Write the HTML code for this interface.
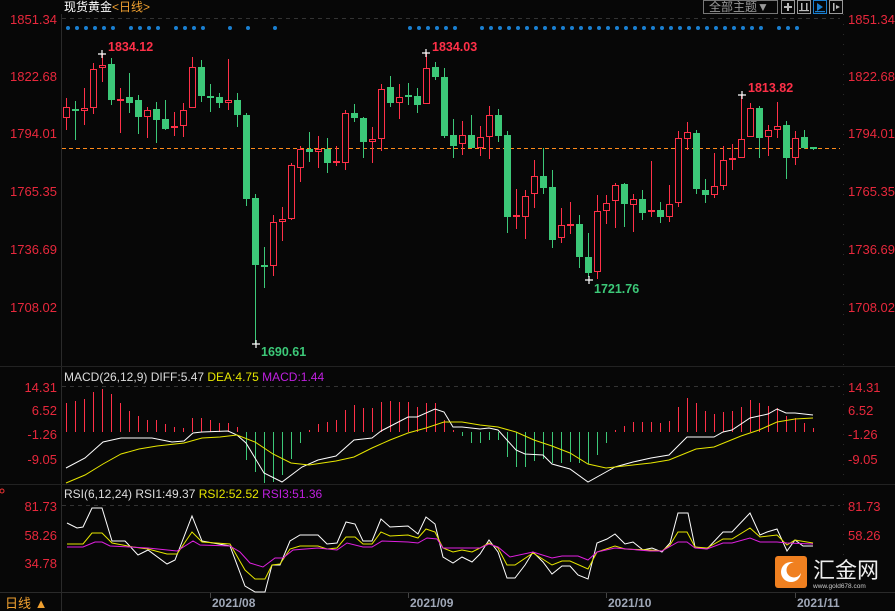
<!DOCTYPE html>
<html><head><meta charset="utf-8"><style>
html,body{margin:0;padding:0;background:#070707;width:895px;height:611px;overflow:hidden}
svg{display:block}
text{font-family:"Liberation Sans","Noto Sans CJK SC",sans-serif}
</style></head><body>
<svg width="895" height="611" viewBox="0 0 895 611" xmlns="http://www.w3.org/2000/svg">
<rect width="895" height="611" fill="#070707"/>
<!-- frame lines -->
<line x1="61.5" y1="14" x2="61.5" y2="611" stroke="#2a2a2a"/>
<line x1="843.5" y1="14" x2="843.5" y2="592" stroke="#2a2a2a" stroke-dasharray="1,9"/>
<line x1="0" y1="366.5" x2="895" y2="366.5" stroke="#222"/>
<line x1="0" y1="484.5" x2="895" y2="484.5" stroke="#222"/>
<line x1="0" y1="592.5" x2="895" y2="592.5" stroke="#2a2a2a"/>
<line x1="62" y1="18.5" x2="840" y2="18.5" stroke="#333" stroke-dasharray="4,4"/>
<line x1="62" y1="386.5" x2="840" y2="386.5" stroke="#333" stroke-dasharray="4,4"/>
<line x1="62" y1="505.5" x2="840" y2="505.5" stroke="#333" stroke-dasharray="4,4"/>
<!-- header -->
<text x="64" y="11" font-size="12" fill="#fff">现货黄金<tspan fill="#f0a030">&lt;日线&gt;</tspan></text>
<rect x="703.5" y="0.5" width="74" height="13" fill="none" stroke="#777"/>
<text x="709" y="11" font-size="12" fill="#999">全部主题▼</text>
<g fill="none" stroke="#999">
<rect x="781.5" y="0.5" width="13" height="13"/><rect x="797.5" y="0.5" width="13" height="13"/>
<rect x="813.5" y="0.5" width="13" height="13" stroke="#1a7fd0"/><rect x="829.5" y="0.5" width="13" height="13"/>
</g>
<g fill="#bbb"><rect x="787" y="3" width="2" height="8"/><rect x="784" y="6" width="8" height="2"/>
<rect x="801" y="3" width="1.5" height="8"/><rect x="806" y="3" width="1.5" height="8"/><rect x="799" y="10" width="10" height="1.2"/>
<path d="M833 3h1.5v8H833z M836 5l4 2-4 2z"/></g>
<path d="M817 3l6 4-6 4z" fill="#1a7fd0"/><rect x="815" y="11" width="10" height="1.2" fill="#1a7fd0"/>
<!-- price axis labels -->
<g font-size="13" fill="#e8283c">
<text x="57" y="24" text-anchor="end">1851.34</text><text x="57" y="81" text-anchor="end">1822.68</text>
<text x="57" y="138" text-anchor="end">1794.01</text><text x="57" y="196" text-anchor="end">1765.35</text>
<text x="57" y="254" text-anchor="end">1736.69</text><text x="57" y="312" text-anchor="end">1708.02</text>
<text x="848" y="24">1851.34</text><text x="848" y="81">1822.68</text>
<text x="848" y="138">1794.01</text><text x="848" y="196">1765.35</text>
<text x="848" y="254">1736.69</text><text x="848" y="312">1708.02</text>
<text x="57" y="392" text-anchor="end">14.31</text><text x="57" y="415" text-anchor="end">6.52</text>
<text x="57" y="439" text-anchor="end">-1.26</text><text x="57" y="464" text-anchor="end">-9.05</text>
<text x="848" y="392">14.31</text><text x="848" y="415">6.52</text>
<text x="848" y="439">-1.26</text><text x="848" y="464">-9.05</text>
<text x="57" y="511" text-anchor="end">81.73</text><text x="57" y="540" text-anchor="end">58.26</text>
<text x="57" y="568" text-anchor="end">34.78</text>
<text x="848" y="511">81.73</text><text x="848" y="540">58.26</text>
</g>
<g id="dots" fill="#1a7fd0"></g>
<line x1="62" y1="148.5" x2="840" y2="148.5" stroke="#ff8a1a" stroke-dasharray="4,3"/>
<g id="candles"></g>
<g id="macd"></g>
<polyline id="diff" fill="none" stroke="#fff" stroke-width="1"/>
<polyline id="dea" fill="none" stroke="#e6e600" stroke-width="1"/>
<polyline id="r1" fill="none" stroke="#fff" stroke-width="1"/>
<polyline id="r2" fill="none" stroke="#e6e600" stroke-width="1"/>
<polyline id="r3" fill="none" stroke="#e020e0" stroke-width="1"/>
<!-- markers -->
<g stroke="#fff" stroke-width="1.2">
<path d="M98 54h8M102 50v8"/><path d="M422 53h8M426 49v8"/><path d="M738 95h8M742 91v8"/>
<path d="M252 344h8M256 340v8"/><path d="M585 280h8M589 276v8"/></g>
<g font-size="12.5" font-weight="bold">
<text x="108" y="51" fill="#ff3048">1834.12</text><text x="432" y="51" fill="#ff3048">1834.03</text>
<text x="748" y="92" fill="#ff3048">1813.82</text>
<text x="261" y="356" fill="#3cc878">1690.61</text><text x="594" y="293" fill="#3cc878">1721.76</text></g>
<!-- titles -->
<text x="64" y="381" font-size="12" fill="#ddd">MACD(26,12,9) DIFF:5.47 <tspan fill="#e6e600">DEA:4.75</tspan> <tspan fill="#c020e0">MACD:1.44</tspan></text>
<text x="64" y="498" font-size="12" fill="#ddd">RSI(6,12,24) RSI1:49.37 <tspan fill="#e6e600">RSI2:52.52</tspan> <tspan fill="#c020e0">RSI3:51.36</tspan></text>
<circle cx="2" cy="491" r="2" fill="none" stroke="#e33"/>
<!-- bottom -->
<text x="5" y="608" font-size="13" fill="#f0a030">日线 ▲</text>
<g stroke="#444"><line x1="210.5" y1="593" x2="210.5" y2="598"/><line x1="408.5" y1="593" x2="408.5" y2="598"/><line x1="606.5" y1="593" x2="606.5" y2="598"/><line x1="795.5" y1="593" x2="795.5" y2="598"/></g>
<g font-size="12" font-weight="bold" fill="#a0a8b8">
<text x="212" y="607">2021/08</text><text x="410" y="607">2021/09</text><text x="608" y="607">2021/10</text><text x="797" y="607">2021/11</text></g>
<!-- logo -->
<rect x="775" y="556" width="32" height="32" rx="3" fill="#f08020"/>
<circle cx="791" cy="572" r="10" fill="#fff"/><circle cx="794" cy="570" r="7.5" fill="#f08020"/>
<text x="813" y="578" font-size="22" fill="#eee" font-family="Noto Sans CJK SC,sans-serif">汇金网</text>
<text x="813" y="588" font-size="6.5" fill="#ccc">www.gold678.com</text>
</svg>
<script>
var NS="http://www.w3.org/2000/svg";
function el(p,t,a){var e=document.createElementNS(NS,t);for(var k in a)e.setAttribute(k,a[k]);p.appendChild(e);return e;}
var dx=[68,77,86,95,104,113,131,140,149,158,176,185,194,203,230,248,275];
for(var x=410;x<=455;x+=9)dx.push(x);for(var x=482;x<=761;x+=9)dx.push(x);dx.push(779,788,797);
var dg=document.getElementById('dots');dx.forEach(function(x){el(dg,'circle',{cx:x,cy:28,r:2});});
var C=[
"r107,118,98,130","g110,110,101,140","r108,111,88,125","r69,108,63,114","r65,68,54,82","g64,100,58,105","r100,100,88,133","g97,103,73,113","g100,117,95,134","r110,117,107,138",
"g109,120,102,143","g119,129,100,130","r126,128,112,136","r110,126,103,137","r67,108,57,108","g67,96,60,102","g97,97,84,112","g97,103,93,108","r100,103,59,110","g100,115,93,127",
"g115,199,113,206","g198,265,194,344","g266,266,247,288","r222,266,215,276","r219,222,207,241","r165,219,163,220","r149,168,146,182","g149,152,132,162","r149,152,136,168","g149,163,138,173",
"r162,162,146,166","r113,163,110,170","g113,118,104,122","g118,142,117,158","r139,142,127,163","r89,139,84,151","g87,103,76,107","r97,103,84,119","g96,96,83,105","g96,105,88,113",
"r68,104,53,104","g67,77,62,80","g77,136,68,138","g135,146,119,158","r135,144,121,155","g135,148,115,148","r137,148,126,156","r115,137,106,159","g115,136,109,142","g135,217,131,233",
"r216,216,189,229","r196,217,190,239","r176,194,160,208","g176,188,148,194","g187,240,170,248","r225,238,208,243","r225,225,202,234","g224,257,215,268","g257,273,233,277","r211,272,195,279",
"r203,211,195,224","r185,201,183,228","g184,204,183,227","r199,205,194,232","g199,213,190,220","r211,211,161,217","g210,217,202,223","r204,217,185,222","r138,203,131,207","r132,139,122,150",
"g133,189,130,194","g190,195,179,203","r186,195,153,198","r160,186,146,190","r159,159,144,170","r139,158,95,158","r108,137,103,137","g108,138,106,158","r130,137,125,156","r126,130,102,138",
"g125,158,121,179","r138,158,131,165","g137,148,130,149","g148,149,147,150"];
var cg=document.getElementById('candles');
C.forEach(function(s,i){var col=s[0]=='r'?'#ff3048':'#3cc878';var v=s.slice(1).split(',').map(Number);
var cx=66+9*i+0.5;
el(cg,'line',{x1:cx,y1:v[2],x2:cx,y2:v[3],stroke:col});
if(v[1]-v[0]<2){el(cg,'rect',{x:cx-3.5,y:v[0]-1,width:7,height:2,fill:col});}
else if(s[0]=='r'){el(cg,'rect',{x:cx-3,y:v[0]+0.5,width:6,height:v[1]-v[0]-1,fill:'#070707',stroke:col});}
else{el(cg,'rect',{x:cx-3.5,y:v[0],width:7,height:v[1]-v[0],fill:col});}
});
var M=[403,401,399,392,389,394,403,411,416,420,420,424,427,428,418,418,420,423,423,427,460,472,483,482,475,459,443,430,424,422,420,410,405,408,408,402,401,402,402,407,403,403,420,430,436,443,443,440,440,457,467,467,461,459,463,463,462,463,464,455,443,430,426,422,422,422,423,421,407,398,403,411,414,412,411,407,400,403,406,408,416,418,423,428];
var mg=document.getElementById('macd');
M.forEach(function(y,i){var x=66+9*i+0.5;el(mg,'line',{x1:x,y1:432,x2:x,y2:y,stroke:y<432?'#ff3048':'#3cc878'});});
function P(id,a){document.getElementById(id).setAttribute('points',a);}
P('diff',"66,468 85,458 103,442 121,438 152,438 172,442 184,441 193,433 202,432 228,431 237,435 246,443 264,473 282,482 302,467 318,460 336,456 354,440 372,438 381,431 408,417 417,417 435,409 444,412 453,427 462,427 480,429 489,428 498,430 516,450 525,454 543,455 552,464 570,469 588,482 606,472 615,467 633,462 651,458 669,455 687,437 714,437 723,432 732,430 750,418 768,414 777,409 786,413 795,413 813,415");
P('dea',"66,483 85,475 103,464 121,454 139,449 157,446 184,443 202,438 220,437 237,435 255,442 273,454 291,463 309,465 336,461 354,457 372,448 390,440 408,433 426,428 444,422 462,422 480,425 498,427 516,432 534,440 552,446 570,453 588,464 606,468 633,465 651,463 669,460 696,449 714,447 741,436 759,430 777,422 795,419 813,418");
P('r1',"67,523 77,528 83,527 92,508 102,508 112,541 125,541 138,555 148,550 167,564 175,560 192,516 202,541 213,543 230,546 245,586 255,592 265,592 272,565 280,565 290,541 300,535 318,535 327,544 337,543 346,522 355,524 363,541 372,541 381,519 390,527 408,526 418,534 426,517 435,524 443,557 453,563 462,557 472,562 480,554 489,540 498,552 507,578 515,578 525,565 533,552 543,562 552,574 562,566 570,566 578,575 588,579 597,543 607,539 615,534 625,544 633,542 643,550 652,548 662,552 670,543 678,513 688,513 695,547 707,549 723,532 732,532 750,513 760,535 767,532 777,529 787,551 795,540 803,546 813,546");
P('r2',"67,544 83,544 92,533 102,533 112,543 133,547 148,549 167,554 177,554 192,532 202,542 230,544 245,570 255,579 265,579 272,565 280,564 290,549 300,546 318,546 327,549 337,548 346,537 355,537 363,544 372,544 381,532 390,536 408,535 418,538 426,529 435,532 443,548 453,552 462,550 472,552 480,548 489,543 498,548 507,565 515,565 533,553 552,565 562,561 570,561 588,569 597,552 615,546 625,549 650,550 662,551 670,545 678,532 687,532 695,547 707,548 723,539 732,539 750,528 760,537 777,535 787,545 795,540 813,543");
P('r3',"67,547 83,547 95,542 102,542 110,546 130,547 148,548 177,551 193,541 200,545 230,546 240,552 250,563 263,567 275,558 283,558 293,550 318,548 337,550 347,543 363,547 372,547 382,541 408,542 418,543 427,538 437,539 443,548 457,548 480,548 489,544 498,547 510,557 533,552 552,558 562,556 578,556 588,560 597,552 615,548 650,551 662,551 678,542 687,542 695,548 707,549 723,543 732,543 750,538 760,542 777,542 787,543 813,544");
</script>
</body></html>
